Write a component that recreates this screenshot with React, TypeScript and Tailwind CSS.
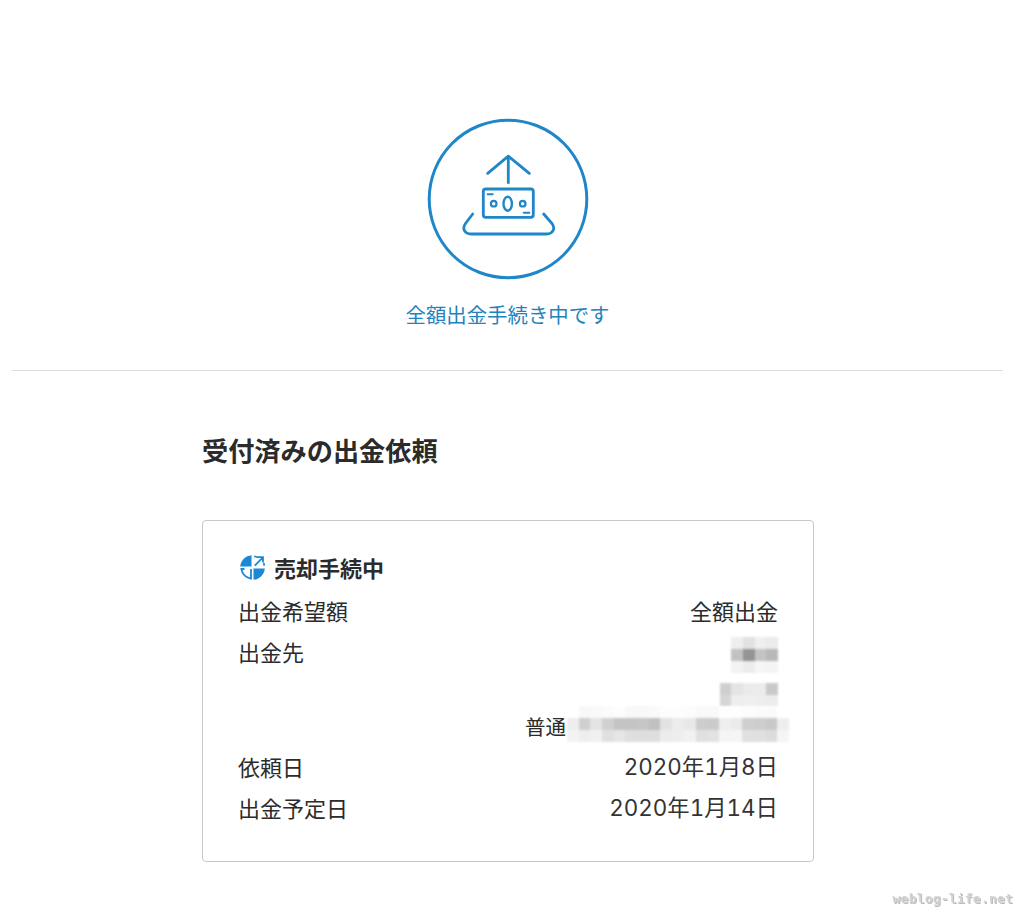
import React from 'react';

const fontStack = '[font-family:"Noto_Sans_CJK_JP","Noto_Sans",sans-serif]';

// mosaic over the bank details, one colour per 12px cell
const bankName = [
  ['#eeeeee', '#e2e2e2', '#efefef', '#ebebeb'],
  ['#c2c2c2', '#949494', '#c4c4c4', '#b8b8b8'],
  ['#f3f3f3', '#ececec', '#f6f6f6', '#f4f4f4'],
];
const branchName = [
  ['#cfcfcf', '#e4e4e4', '#ebebeb', '#ececec', '#c9c9c9'],
  ['#d6d6d6', '#eeeeee', '#efefef', '#ededed', '#ececec'],
];
const accountNumber = [
  ['#ffffff', '#f8f8f8', '#f9f9f9', '#fbfbfb', '#fdfdfd', '#f8f8f8', '#f8f8f8', '#fafafa', '#fdfdfd', '#fdfdfd', '#fcfcfc', '#f9f9f9', '#f9f9f9', '#fefefe', '#fefefe', '#fcfcfc', '#fbfbfb', '#fbfbfb', '#ffffff'],
  ['#eeeeee', '#cfcfcf', '#e4e4e4', '#d0d0d0', '#c4c4c4', '#c4c4c4', '#c6c6c6', '#c0c0c0', '#e3e3e3', '#ececec', '#e8e8e8', '#cdcdcd', '#cbcbcb', '#efefef', '#ebebeb', '#cfcfcf', '#cdcdcd', '#c9c9c9', '#eeeeee'],
  ['#f3f3f3', '#eeeeee', '#f0f0f0', '#e0e0e0', '#e6e6e6', '#dedede', '#dedede', '#dedede', '#ececec', '#eeeeee', '#f1f1f1', '#e0e0e0', '#e2e2e2', '#f5f5f5', '#f5f5f5', '#e0e0e0', '#e0e0e0', '#dcdcdc', '#f5f5f5'],
];

function Mosaic({ rows }: { rows: string[][] }) {
  return (
    <div className="flex flex-col blur-[0.8px]">
      {rows.map((row, i) => (
        <div key={i} className="flex">
          {row.map((color, j) => (
            <div key={j} className="w-[11.7px] h-[12px]" style={{ backgroundColor: color }} />
          ))}
        </div>
      ))}
    </div>
  );
}

function WithdrawIcon() {
  return (
    <svg width="162" height="162" viewBox="0 0 162 162" fill="none" stroke="#1f86c8" strokeLinecap="round" strokeLinejoin="round" className="blur-[0.5px]">
      <circle cx="81" cy="81" r="78.8" strokeWidth="3" />
      <path d="M60.7 55.3 81.3 38.2 102.3 55.3M81.3 39v25.7" strokeWidth="2.8" />
      <rect x="56.3" y="71" width="50" height="28.3" rx="2.5" strokeWidth="2.8" />
      <circle cx="66.7" cy="85.7" r="2.8" strokeWidth="2.2" />
      <circle cx="95.7" cy="85.7" r="2.8" strokeWidth="2.2" />
      <ellipse cx="80.7" cy="85.7" rx="4.2" ry="7" strokeWidth="2.4" />
      <path d="M60.7 76.3h5M96.7 94.7h5.6" strokeWidth="2" />
      <path d="M45.7 96 38.5 105.5c-3.8 5.2-.8 10.5 5.5 10.5H119.5c6.3 0 9.3-5.3 5.5-10.5L116.7 96" strokeWidth="2.8" />
    </svg>
  );
}

function StatusIcon() {
  return (
    <svg width="25" height="25" viewBox="0 0 25 25" fill="none" className="blur-[0.3px]">
      <path d="M11.5 0.2V11.5H0.2C0.7 5.4 5.4 0.7 11.5 0.2Z" fill="#1b87d6" />
      <path d="M13.5 24.8V13.5H24.8C24.3 19.6 19.6 24.3 13.5 24.8Z" fill="#1b87d6" />
      <path d="M11 14v9.6C6 22.8 2.2 19 1.4 14H4.5" stroke="#1b87d6" strokeWidth="1.8" />
      <path d="M14.2 1.4C15.5 1.5 16.8 1.9 18 2.5M23.7 8C24 8.9 24.1 9.6 24.2 10.6M14.8 10.6 22.6 2.6M17.8 2.2h5.2v5.2" stroke="#1b87d6" strokeWidth="1.8" />
    </svg>
  );
}

function Row({ label, value, numeric }: { label: string; value: string; numeric?: boolean }) {
  return (
    <div className="flex justify-between items-center h-[41px]">
      <span>{label}</span>
      <span className={numeric ? "[font-family:Inter,'Noto_Sans_CJK_JP',sans-serif] text-[22.4px] tabular-nums text-[#333333] mt-[1px]" : ''}>{value}</span>
    </div>
  );
}

export default function App() {
  return (
    <div className={`${fontStack} bg-white h-[919px] overflow-hidden relative text-[#2b2b2b]`}>
      <div className="w-[1015px]">
        <div className="flex flex-col items-center pt-[118px]">
          <WithdrawIcon />
          <p className="mt-[19px] text-[20.4px] leading-[30px] text-[#2383bd]">全額出金手続き中です</p>
        </div>

        <div className="mx-[12px] mt-[41px] border-t border-[#dcdcdc]" />

        <div className="w-[612px] ml-[202px]">
          <h2 className="mt-[59px] text-[26.2px] leading-[40px] font-bold text-[#2b2b2b]">受付済みの出金依頼</h2>

          <div className="mt-[50px] h-[342px] border border-[#c8c8c8] rounded-[4px] pt-[28px] px-[35px] text-[22px]">
            <div className="flex items-center gap-[9px] h-[36px] ml-[2px]">
              <StatusIcon />
              <span className="text-[22px] font-bold">売却手続中</span>
            </div>
            <div className="mt-[5px]">
              <Row label="出金希望額" value="全額出金" />
              <div className="flex justify-between h-[115px]">
                <span className="leading-[41px]">出金先</span>
                <div className="flex flex-col items-end pt-[6px] relative">
                  <Mosaic rows={bankName} />
                  <div className="mt-[10px]">
                    <Mosaic rows={branchName} />
                  </div>
                  <div className="flex items-center mt-[-1px] mr-[-11px]">
                    <span className="mr-[1px] mt-[4px] text-[20.5px]">普通</span>
                    <Mosaic rows={accountNumber} />
                  </div>
                </div>
              </div>
              <Row label="依頼日" value="2020年1月8日" numeric />
              <Row label="出金予定日" value="2020年1月14日" numeric />
            </div>
          </div>
        </div>
      </div>

      <span className="absolute right-[11px] top-[890px] text-[13px] leading-[18px] tracking-[0.2px] font-bold text-[#d4d4d4] [font-family:'DejaVu_Sans_Mono',monospace] [text-shadow:1px_1px_0_#bbbbbb] blur-[0.6px]">
        weblog-life.net
      </span>
    </div>
  );
}
